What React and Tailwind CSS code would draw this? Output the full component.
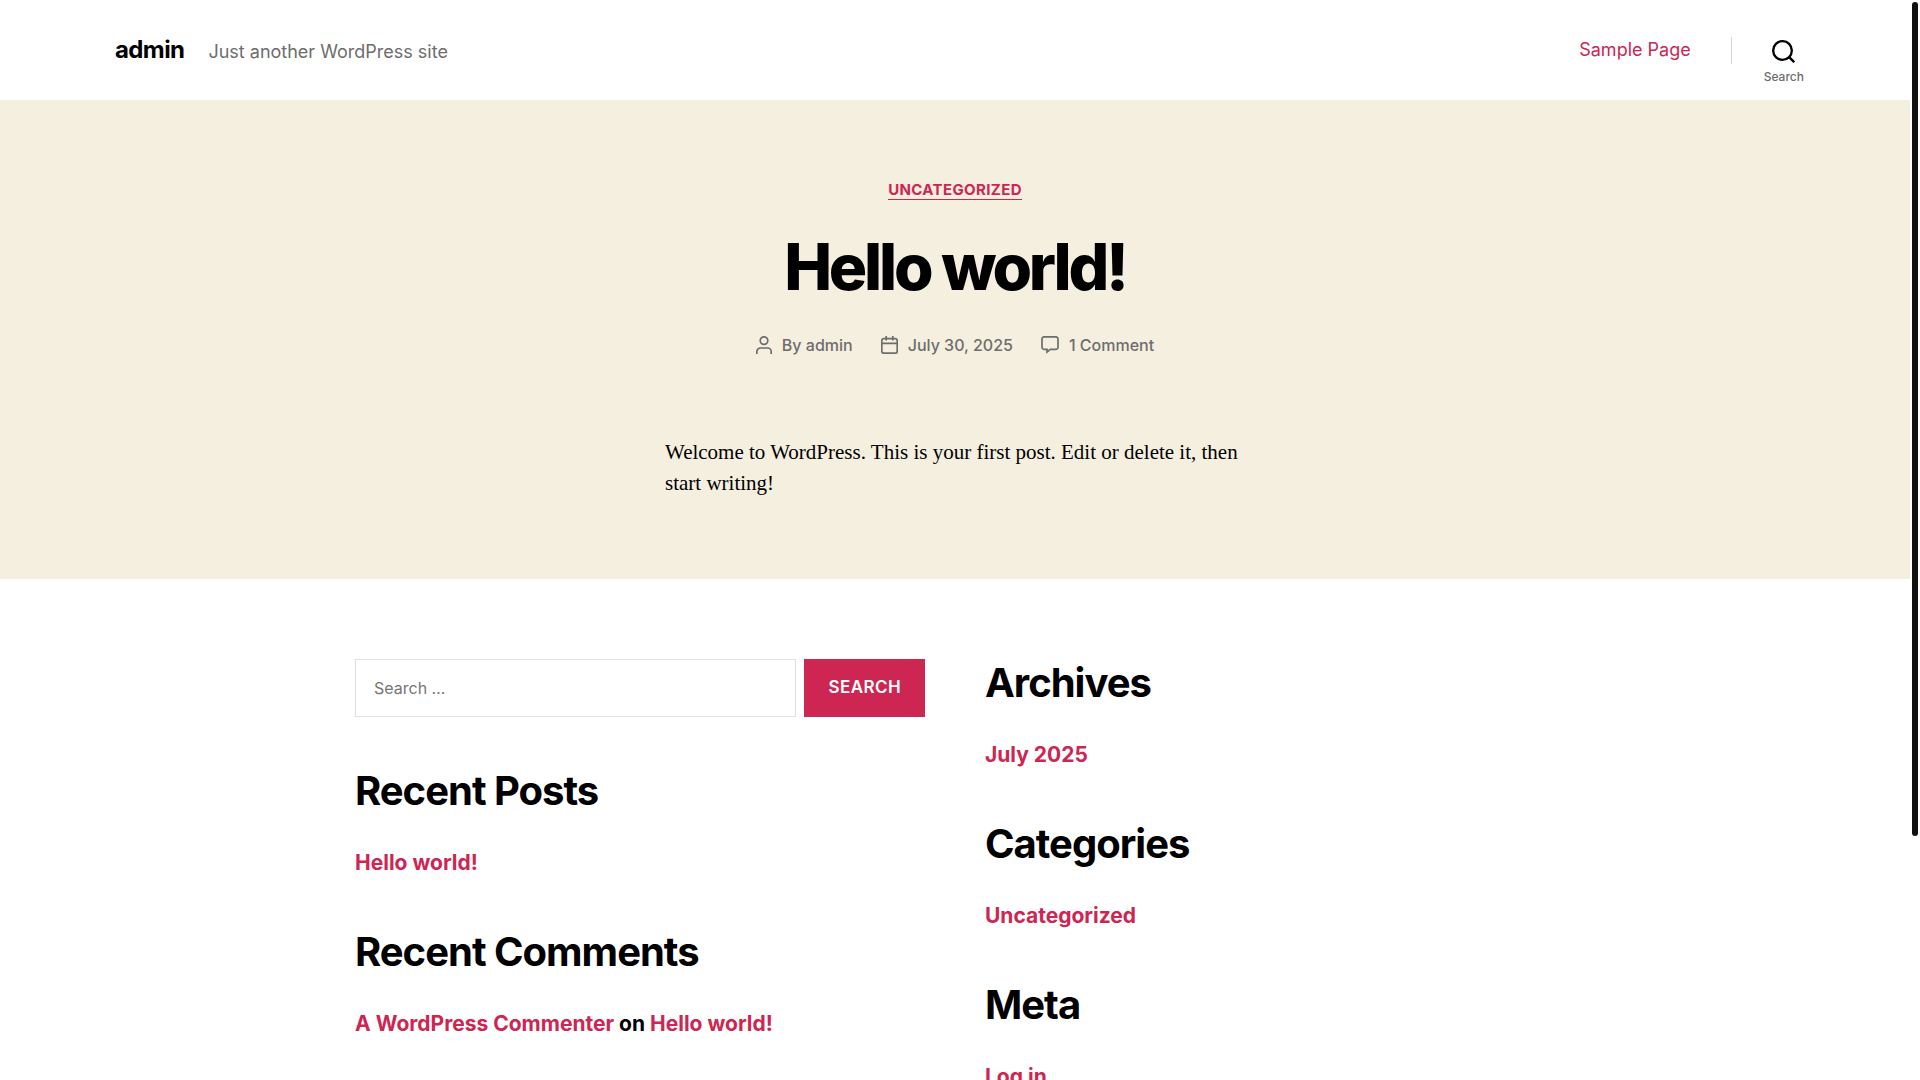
const widgetsLeft = [
  { title: "Recent Posts", links: ["Hello world!"] },
];

const widgetsRight = [
  { title: "Archives", links: ["July 2025"] },
  { title: "Categories", links: ["Uncategorized"] },
  { title: "Meta", links: ["Log in"] },
];

function SearchIcon() {
  return (
    <svg width="23" height="23" viewBox="0 0 23 23" fill="none" stroke="currentColor" strokeWidth="2.33" aria-hidden="true">
      <circle cx="10.5" cy="10.5" r="9.34" />
      <path d="M16.9 16.9 L22.2 22.2" />
    </svg>
  );
}

function PersonIcon() {
  return (
    <svg width="16" height="18" viewBox="0 0 16 18" fill="none" stroke="currentColor" strokeWidth="1.7" aria-hidden="true">
      <circle cx="8" cy="4.6" r="3.8" />
      <path d="M0.8 18 V15.6 A3.6 3.6 0 0 1 4.4 12 H11.6 A3.6 3.6 0 0 1 15.2 15.6 V18" />
    </svg>
  );
}

function CalendarIcon() {
  return (
    <svg width="17" height="18" viewBox="0 0 17 18" fill="none" stroke="currentColor" strokeWidth="1.7" aria-hidden="true">
      <rect x="0.8" y="2.6" width="15.4" height="14.6" rx="2" />
      <path d="M0.8 7.4 H16.2 M5.2 0 V4.6 M11.8 0 V4.6" />
    </svg>
  );
}

function CommentIcon() {
  return (
    <svg width="18" height="18" viewBox="0 0 18 18" fill="none" stroke="currentColor" strokeWidth="1.7" aria-hidden="true">
      <path d="M6 16 L9.3 13.4 H14.8 A2.2 2.2 0 0 0 17 11.2 V3 A2.2 2.2 0 0 0 14.8 0.8 H3.2 A2.2 2.2 0 0 0 1 3 V11.2 A2.2 2.2 0 0 0 3.2 13.4 H6 Z" />
    </svg>
  );
}

function Header() {
  return (
    <header className="bg-white">
      <div className="mx-auto flex h-[100px] max-w-[1680px] items-center justify-between">
        <div className="flex items-baseline gap-6">
          <a href="#home" className="text-2xl font-bold tracking-tight text-black">admin</a>
          <p className="text-lg text-[#6d6d6d]">Just another WordPress site</p>
        </div>
        <div className="flex items-center">
          <nav className="pr-10">
            <a href="#sample" className="text-lg text-[#cd2653]">Sample Page</a>
          </nav>
          <div className="h-[27px] border-l border-[#dcd7ca]" />
          <button className="-mr-[9px] ml-8 flex flex-col items-center gap-1.5 pt-6 text-black">
            <SearchIcon />
            <span className="text-xs font-medium text-[#6d6d6d]">Search</span>
          </button>
        </div>
      </div>
    </header>
  );
}

function Post() {
  return (
    <article className="bg-[#f5efe0] py-20">
      <div className="flex flex-col items-center text-center">
        <a
          href="#uncategorized"
          className="border-b border-[#cd2653] text-[15px] leading-[19px] font-bold tracking-wide text-[#cd2653] uppercase"
        >
          Uncategorized
        </a>
        <h1 className="mt-7 text-[64px] leading-[77px] font-extrabold tracking-tighter text-black">Hello world!</h1>
        <ul className="mt-7 flex gap-7 text-base font-medium text-[#6d6d6d]">
          <li className="flex items-center gap-2.5">
            <PersonIcon />
            <span>By <a href="#admin">admin</a></span>
          </li>
          <li className="flex items-center gap-2.5">
            <CalendarIcon />
            <a href="#date">July 30, 2025</a>
          </li>
          <li className="flex items-center gap-2.5">
            <CommentIcon />
            <a href="#comments">1 Comment</a>
          </li>
        </ul>
      </div>
      <p className="mx-auto mt-20 max-w-[580px] font-['Liberation_Serif',serif] text-[21px] leading-[31px] text-black">
        Welcome to WordPress. This is your first post. Edit or delete it, then start writing!
      </p>
    </article>
  );
}

function Widget({ title, children }) {
  return (
    <section>
      <h2 className="text-[40px] leading-[48px] font-bold tracking-tight text-black">{title}</h2>
      <ul className="mt-8 text-[21px] leading-[31px] font-bold text-black">{children}</ul>
    </section>
  );
}

function LinkWidget({ widget }) {
  return (
    <Widget title={widget.title}>
      {widget.links.map((link) => (
        <li key={link}>
          <a href="#link" className="text-[#cd2653]">{link}</a>
        </li>
      ))}
    </Widget>
  );
}

function SearchForm() {
  return (
    <form className="flex gap-2" onSubmit={(e) => e.preventDefault()}>
      <input
        type="search"
        aria-label="Search for:"
        placeholder="Search …"
        className="h-[58px] min-w-0 flex-1 border border-[#dedfdf] bg-white px-[18px] text-base placeholder:text-[#757575]"
      />
      <button className="bg-[#cd2653] px-6 text-[17px] font-semibold tracking-wide text-white uppercase">Search</button>
    </form>
  );
}

export default function App() {
  return (
    <div className="flex h-screen overflow-hidden bg-white font-['Inter',sans-serif]">
      <main className="min-w-0 flex-1">
        <Header />
        <Post />
        <div className="mx-auto grid max-w-[1200px] grid-cols-2 gap-[60px] pt-20">
          <div className="flex flex-col gap-[50px]">
            <SearchForm />
            {widgetsLeft.map((w) => (
              <LinkWidget key={w.title} widget={w} />
            ))}
            <Widget title="Recent Comments">
              <li>
                <a href="#commenter" className="text-[#cd2653]">A WordPress Commenter</a> on{" "}
                <a href="#post" className="text-[#cd2653]">Hello world!</a>
              </li>
            </Widget>
          </div>
          <div className="flex flex-col gap-[50px]">
            {widgetsRight.map((w) => (
              <LinkWidget key={w.title} widget={w} />
            ))}
          </div>
        </div>
      </main>
      {/* scroll track */}
      <div className="w-2.5 p-0.5">
        <div className="h-[77.5%] rounded-full bg-[#111111]" />
      </div>
    </div>
  );
}
